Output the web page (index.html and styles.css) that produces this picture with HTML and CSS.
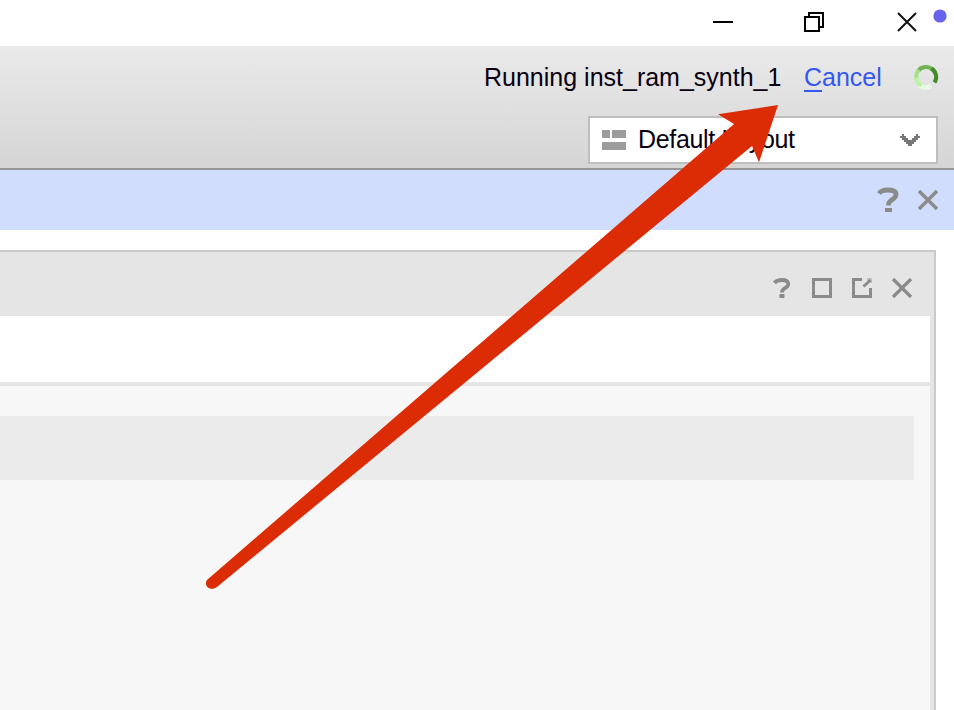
FILE: index.html
```html
<!DOCTYPE html>
<html lang="en">
<head>
<meta charset="utf-8">
<title>Default Layout</title>
<link rel="stylesheet" href="styles.css">
</head>
<body>
<div class="window">
  <header class="titlebar">
    <svg class="controls" width="242" height="46" viewBox="0 0 242 46" fill="none" stroke="#000" stroke-width="2">
      <path d="M1 22H21M93 17H107V31H93ZM97 17V13H111V27H107"/>
      <path d="M186 13L204 31M204 13L186 31" stroke="#111"/>
      <circle cx="228" cy="16" r="6.6" fill="#6563ee" stroke="none"/>
    </svg>
  </header>
  <div class="toolbar">
    <div class="status">
      <span class="task">Running inst_ram_synth_1</span>
      <a class="cancel"><span class="key">C</span>ancel</a>
      <svg class="spinner" width="26" height="26" viewBox="0 0 26 26" fill="none" stroke-width="4">
        <path d="M6 21A10 10 0 0 0 18 22" stroke="#e9fbe2" stroke-width="4.500"/>
        <path d="M5 7A10 10 0 0 1 20 6" stroke="#72b453"/>
        <path d="M18.500 4.500A10 10 0 0 1 21.500 18.500" stroke="#438a29"/>
        <path d="M6 6A10 10 0 0 0 3.500 15" stroke="#a2df88"/>
        <path d="M3.300 13.500A10 10 0 0 0 8.500 21.500" stroke="#b9f5a3"/>
      </svg>
    </div>
    <div class="select">
      <svg width="24" height="20" viewBox="0 0 24 20" fill="#9c9c9c"><path d="M0 0H8V8H0ZM10 0H24V8H10ZM0 12H24V20H0Z"/></svg>
      <span class="choice">Default Layout</span>
      <svg class="chevron" width="20" height="12" viewBox="0 0 20 12" fill="#777" shape-rendering="crispEdges"><path d="M2 0h2v2h-2zM16 0h2v2h-2zM0 2h6v2h-6zM14 2h6v2h-6zM2 4h6v2h-6zM12 4h6v2h-6zM4 6h12v2h-12zM6 8h8v2h-8zM8 10h4v2h-4z"/></svg>
    </div>
  </div>
  <div class="banner">
    <svg width="64" height="28" viewBox="0 0 64 28" fill="none" stroke="#8b8b8b">
      <path d="M2 7.500C4 4.500 7 4 11 4C16 4 19 5 19 8.500C19 12 16 13 14 14.500C12 16 11.500 16.500 11.500 19.500" stroke-width="4.800"/>
      <path d="M8 22H15V26H8Z" fill="#8b8b8b" stroke="none"/>
      <path d="M42 5L60 23M60 5L42 23" stroke-width="3.4"/>
    </svg>
  </div>
  <main class="workspace">
    <section class="panel">
      <div class="panel-head">
        <svg width="142" height="20" viewBox="0 0 142 20" fill="none" stroke="#8b8b8b">
          <path d="M2.500 5C4.500 2.300 6.500 2 10 2C14 2 16.300 3 16.300 6C16.300 9 13.500 9.500 12 10.800C10.500 12 10 12.500 10 14.500" stroke-width="3.800"/>
          <path d="M7.500 16H12.500V20H7.500Z" fill="#8b8b8b" stroke="none"/>
          <path d="M41.500 1.500H58.500V18.500H41.500Z" stroke-width="3"/>
          <path d="M90 1.500H81.500V18.500H98.500V10M91.500 8.500L98.500 2" stroke-width="3"/>
          <path d="M95 0H100V5L98 5L95 3Z" fill="#8b8b8b" opacity=".4" stroke="none"/>
          <path d="M121 1L139 19M139 1L121 19" stroke-width="3.300"/>
        </svg>
      </div>
      <div class="field"></div>
      <div class="content"><div class="row"></div></div>
    </section>
  </main>
  <svg class="arrow" width="954" height="710" viewBox="0 0 954 710"><path d="M778 105L718 114.300L734 124L207.500 579.500C204.500 582.500 206 587 210 588.500C212.500 589.300 215 588.500 217 587L752 146L759 162.300Z" fill="#dc2c05"/></svg>
</div>
</body>
</html>
```
FILE: styles.css
```css
* { box-sizing: border-box; }
body { margin: 0; font-family: "Liberation Sans", Arial, sans-serif; }
svg { display: block; flex: none; }
.window { position: relative; display: flex; flex-direction: column; width: 954px; height: 710px; overflow: hidden; background: #fff; }
.titlebar { height: 46px; display: flex; justify-content: flex-end; }
.toolbar { height: 124px; display: flex; flex-direction: column; align-items: flex-end; background: linear-gradient(#eaeaea, #d5d5d5); border-bottom: 2px solid #969696; }
.status { height: 70px; padding: 2px 15px 10px 0; display: flex; align-items: center; font-size: 25px; white-space: nowrap; color: #080010; }
.task { width: 297px; margin-right: 23px; }
.cancel { width: 77px; margin-right: 32px; color: #3458f0; line-height: 29px; }
.key { display: inline-block; line-height: 25px; box-shadow: 0 2px 0 #3458f0; }
.select { width: 350px; height: 48px; margin-right: 16px; padding: 0 16px 0 12px; display: flex; align-items: center; background: #fff; border: 2px solid #bebebe; font-size: 25px; color: #080010; }
.choice { margin-left: 12px; padding-bottom: 2px; letter-spacing: -.32px; }
.chevron { margin-left: auto; }
.banner { height: 60px; padding-right: 13px; display: flex; align-items: center; justify-content: flex-end; background: #d0ddfd; }
.workspace { flex: 1; padding: 20px 18px 0 0; }
.panel { height: 100%; display: flex; flex-direction: column; background: #e5e5e5; border: solid #cacaca; border-width: 2px 2px 0 0; padding-right: 4px; }
.panel-head { height: 64px; padding: 8px 16px 0 0; display: flex; align-items: center; justify-content: flex-end; }
.field { height: 66px; background: #fff; }
.content { flex: 1; margin-top: 4px; padding: 30px 16px 0 0; background: #f7f7f7; }
.row { height: 64px; background: #ebebeb; }
.arrow { position: absolute; top: 0; left: 0; }
```
